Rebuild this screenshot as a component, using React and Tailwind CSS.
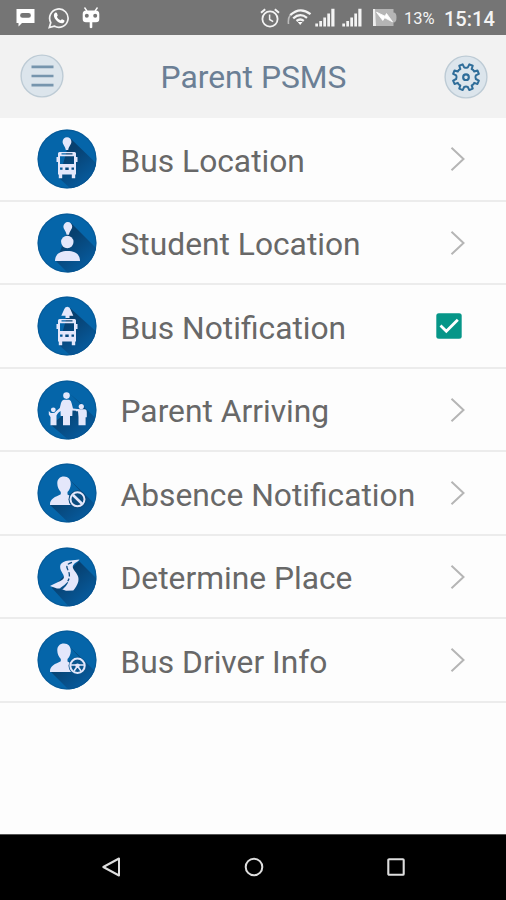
import React, { useState } from 'react';

const StatusBar = () => (
  <div className="h-[35px] bg-[#757575] flex items-center justify-between pl-4 pr-[11px] text-[#f4f4f4]">
    <div className="flex items-center">
      <svg className="w-[19px] h-[19px]" viewBox="0 0 19 19">
        <path fillRule="evenodd" fill="#fff" d="M0.5 1H18.5V15H6L2.5 18.5V15H0.5Z M6.5 5A2.3 2.3 0 0 0 6.5 9.8H12.5A2.3 2.3 0 0 0 12.5 5Z" />
      </svg>
      <svg className="w-[22px] h-[22px] ml-[13px]" viewBox="0 0 22 22" fill="none" stroke="#f4f4f4">
        <path strokeWidth="1.7" d="M1.3 20.5L2.8 15.6A9.2 9.2 0 1 1 6.2 19.1Z" />
        <path fill="#fff" stroke="none" d="M7.4 5.5C8.3 5.2 8.7 5.5 9 6.3L9.7 8.2C9.9 8.9 8.7 9.6 8.9 10C9.7 11.5 10.8 12.5 12.3 13.2C12.9 13.4 13.5 12 14.1 12.2L16.2 13.3C16.8 13.7 16.4 15.1 15.6 15.7C13.6 17.2 10.3 15.4 8.2 13.2C6.2 11.1 4.6 7.4 7.4 5.5Z" />
      </svg>
      <svg className="w-[18px] h-[22px] ml-3" viewBox="0 0 18 22">
        <path d="M2.5 0.5L5 4M15.5 0.5L13 4" stroke="#fff" strokeWidth="1.3" />
        <path fillRule="evenodd" fill="#fff" d="M4 3.5H14Q17.3 3.5 17.3 7V12Q17.3 15.3 14 15.3H10.3V20.5Q9 22 7.7 20.5V15.3H4Q0.7 15.3 0.7 12V7Q0.7 3.5 4 3.5Z M4.8 6.8A2 2 0 1 0 4.8 10.8A2 2 0 1 0 4.8 6.8Z M13.2 6.8A2 2 0 1 0 13.2 10.8A2 2 0 1 0 13.2 6.8Z" />
      </svg>
    </div>
    <div className="flex items-center">
      <svg className="w-5 h-5" viewBox="0 0 20 20" fill="none" stroke="#f4f4f4" strokeWidth="1.8">
        <circle cx="10" cy="11" r="7.6" />
        <path d="M1 4.7L5.2 1.2M19 4.7L14.8 1.2" strokeWidth="2" />
        <path d="M9.6 6.5V11.5L13.2 13.7" strokeWidth="1.5" />
      </svg>
      <svg className="w-[25px] h-[19px] ml-[7px]" viewBox="0 0 25 19" fill="none" stroke="#f4f4f4" strokeWidth="2.3">
        <path d="M3.2 7.2Q13 -2 23.5 6.2" />
        <path d="M6.2 10.3Q13 4.3 20 9.8" />
        <path d="M9.5 13Q13.2 10 16.8 12.8" />
        <path d="M10.8 14L13.2 17L15.5 14Z" fill="#fff" stroke="none" />
        <path d="M3.2 7.2Q0.8 10 1.5 16" stroke="#bcbcbc" strokeWidth="1.6" />
      </svg>
      <Signal className="ml-[3px]" />
      <Signal className="ml-[7px]" />
      <svg className="w-6 h-[19px] ml-[11px]" viewBox="0 0 24 19">
        <path d="M0 1H20.5V4.5Q23.5 4.5 23.5 9.5T20.5 14.5V18H0Z" fill="#b5b5b5" />
        <path d="M0 1H2L3 18H0Z" fill="#eee" />
        <path d="M3.5 4.2L12 8.2L13.5 5.5L19.5 13.8L11.7 9.8L9.8 12.5Z" fill="#fff" stroke="#fff" strokeWidth="0.8" />
      </svg>
      <span className="ml-[7.5px] w-[31px] text-[16.5px] leading-none whitespace-nowrap mt-[3px]">13%</span>
      <span className="ml-[9px] w-[51px] text-[20px] leading-none font-medium whitespace-nowrap mt-[3px]">15:14</span>
    </div>
  </div>
);

const Signal = ({ className }) => (
  <svg className={`w-5 h-[19px] ${className}`} viewBox="0 0 20 19" fill="#f4f4f4">
    <path d="M0.3 15.5H3V18.5H0.3ZM4.3 13H7V18.5H4.3ZM8.3 9.5H11V18.5H8.3ZM12.3 5.5H15V18.5H12.3ZM16.3 0.8H19.5V18.5H16.3Z" />
  </svg>
);

const Header = () => (
  <header className="h-[83px] bg-[#f2f2f2] flex items-center justify-between pl-5 pr-[18px]">
    <button className="mb-0.5">
      <svg className="w-11 h-11" viewBox="0 0 44 44">
        <circle cx="22" cy="22" r="20.9" fill="#dce5ec" stroke="#bdcbd5" strokeWidth="1.4" />
        <path d="M11.5 12.9H33.5M11.5 22H33.5M11.5 31.1H33.5" stroke="#7695ad" strokeWidth="2.6" />
      </svg>
    </button>
    <h1 className="text-[31.8px] leading-none text-[#6b7f95] whitespace-nowrap pt-0.5 pr-px">Parent PSMS</h1>
    <button>
      <svg className="w-11 h-11" viewBox="0 0 44 44" fill="none">
        <circle cx="22" cy="22" r="20.9" fill="#dce5ec" stroke="#bdcbd5" strokeWidth="1.4" />
        <g transform="translate(22 22.2)" stroke="#2f6d99">
          <path
            d="M9.83 1.82L12.88 3.33L11.46 6.75L8.24 5.66Q7.5 7.5 5.66 8.24L6.75 11.46L3.33 12.88L1.82 9.83Q0 9 -1.82 9.83L-3.33 12.88L-6.75 11.46L-5.66 8.24Q-7.5 7.5 -8.24 5.66L-11.46 6.75L-12.88 3.33L-9.83 1.82Q-9 0 -9.83 -1.82L-12.88 -3.33L-11.46 -6.75L-8.24 -5.66Q-7.5 -7.5 -5.66 -8.24L-6.75 -11.46L-3.33 -12.88L-1.82 -9.83Q0 -9 1.82 -9.83L3.33 -12.88L6.75 -11.46L5.66 -8.24Q7.5 -7.5 8.24 -5.66L11.46 -6.75L12.88 -3.33L9.83 -1.82Q9 0 9.83 1.82Z"
            strokeWidth="2" strokeLinejoin="round"
          />
          <circle r="2.8" strokeWidth="2.2" />
        </g>
      </svg>
    </button>
  </header>
);

const Disc = ({ id, shadow, children }) => (
  <svg className="w-[60px] h-[60px] shrink-0 mt-px" viewBox="0 0 60 60">
    <defs>
      <clipPath id={`${id}-clip`}><circle cx="30" cy="30" r="29.5" /></clipPath>
      <linearGradient id={`${id}-shade`} gradientUnits="userSpaceOnUse" x1="30" y1="26" x2="50" y2="50">
        <stop offset="0" stopColor="#07406f" />
        <stop offset="1" stopColor="#07599a" />
      </linearGradient>
    </defs>
    <circle cx="30" cy="30" r="29.5" fill="#0565a9" />
    <path d={shadow} fill={`url(#${id}-shade)`} clipPath={`url(#${id}-clip)`} />
    <circle cx="30" cy="30" r="28.9" fill="none" stroke="#07508a" strokeWidth="1.1" opacity="0.5" />
    <g fill="#e4e7fb">{children}</g>
  </svg>
);

const Pin = () => (
  <path d="M30 8.3A4.4 4.4 0 0 1 34.4 12.7C34.4 15.5 31.8 17 31.2 21H28.8C28.2 17 25.6 15.5 25.6 12.7A4.4 4.4 0 0 1 30 8.3Z" />
);

const Bus = () => (
  <path
    fillRule="evenodd"
    d="M22.5 23H37.5Q39 23 39 24.5V28H40.5V33H39V45.5H38.2V49.2H34.8V45.5H25.2V49.2H21.8V45.5H21V33H19.5V28H21V24.5Q21 23 22.5 23Z M24.5 24.3V25.5H35.5V24.3Z M23 27.2V35H37V27.2Z M23 38.4V40.8H25.5V38.4Z M34.5 38.4V40.8H37V38.4Z M28.3 38.4V41H31.7V38.4Z"
  />
);

const User = () => (
  <path d="M27 13.5C31.2 13.5 34 16.5 33.8 21.2C33.6 25 32 27.5 30.5 29V31.5C34 33.8 40.5 34 40.8 38V42H13C12.6 35.5 18.5 34 23.8 31.3V29C21.8 27 20.3 24 20.3 20.5C20.2 16.2 22.8 13.5 27 13.5Z" />
);

const BusLocationIcon = () => (
  <Disc id="bus-location" shadow="M34 10L60 35V60H34L22 49L30 21Z">
    <Pin />
    <Bus />
  </Disc>
);

const StudentLocationIcon = () => (
  <Disc id="student-location" shadow="M34 10L64 40V60H31L19 48L30 21Z">
    <g transform="translate(.8 .8)"><Pin /></g>
    <circle cx="30.3" cy="29" r="6.2" />
    <path d="M18 48C18 41.5 22.5 38 30.5 38S43 41.5 43 48Z" />
  </Disc>
);

const BusNotificationIcon = () => (
  <Disc id="bus-notification" shadow="M33 12L62 38V60H34L22 49L30 20Z">
    <path d="M30.3 10.8Q32.8 10.8 33.5 13.4L36.3 19.8H24.3L27.1 13.4Q27.8 10.8 30.3 10.8ZM28.5 19.8H32.5V22H28.5Z" />
    <Bus />
  </Disc>
);

const ParentIcon = () => (
  <Disc id="parent" shadow="M32 13L62 41V62H34L14 45L30 32L48 27Z">
    <circle cx="29.5" cy="15.6" r="3.3" />
    <path d="M26.8 19.8H32.2Q34.2 20.2 34.7 23.5L36 28.5L42.5 29.3V31L35.5 30.6L35.3 36H33V45.2H26V36H23.7L23.5 31L18 35.2L16.8 33.3L22.8 28L24 23Q24.8 20.2 26.8 19.8Z" />
    <circle cx="16.3" cy="29.8" r="2.4" />
    <circle cx="44.3" cy="26.6" r="2.6" />
    <path d="M11.8 31L13.8 33H18.3L20.8 31L21.3 32.3L19.5 35.5V45.2H13.5V37L11.8 34.6Z" />
    <path d="M39 29.3H48Q49.8 29.5 49.8 32V37.2H48.6V45.2H41.5V37L41 31.3H39Z" />
  </Disc>
);

const AbsenceIcon = () => (
  <Disc id="absence" shadow="M32 16L62 45V62H34L13 42L33 31L45 30Z">
    <User />
    <circle cx="40.5" cy="36.3" r="9" fill="#0a4b7e" />
    <circle cx="40.5" cy="36.3" r="7" fill="none" stroke="#e4e7fb" strokeWidth="2" />
    <path d="M36 32L45 40.8" stroke="#e4e7fb" strokeWidth="2.6" />
  </Disc>
);

const RoadIcon = () => (
  <Disc id="road" shadow="M42 14L61 33V62H34L15 41Z">
    <path d="M26 15.2Q29 13.2 33.5 13.6L42.5 12.6Q42 14.2 38.5 15.8C35.5 18 35 20 37 23C40 27 42.3 29.8 41.3 34.5C40.6 38 38 41.5 36.3 43.6L29 43.8L23 41.4L20 41.6L13 39C18 35.8 25 34.5 26.8 31C27.8 28.2 24.2 25.5 23.3 21.5C22.8 18.5 23.3 16.8 26 15.2Z" />
    <path d="M35 15.3C29.5 17.2 29 19 30.6 22.3C32.5 26 33.5 29.5 30.8 34.3" fill="none" stroke="#0b4b80" strokeWidth="1.3" strokeDasharray="4.5 2" />
    <path d="M30.5 35Q27.5 38.5 22.5 41.5L25.5 42.4Q29.5 39 31.2 35.4Z" fill="#0b528b" />
  </Disc>
);

const DriverIcon = () => (
  <Disc id="driver" shadow="M32 16L62 45V62H34L14 42L33 31L45 30Z">
    <User />
    <circle cx="40.5" cy="35.8" r="9" fill="#0b568f" />
    <g fill="none" stroke="#e4e7fb" strokeWidth="2">
      <circle cx="40.5" cy="35.8" r="7.2" />
      <path d="M34 35Q37.5 35 40.5 34.8Q43.5 35 47 35M40.5 36L37 41M40.5 36L44 41" strokeWidth="1.6" />
    </g>
    <circle cx="40.5" cy="35.6" r="2.2" />
  </Disc>
);

const items = [
  { label: 'Bus Location', icon: BusLocationIcon },
  { label: 'Student Location', icon: StudentLocationIcon },
  { label: 'Bus Notification', icon: BusNotificationIcon, toggle: true },
  { label: 'Parent Arriving', icon: ParentIcon },
  { label: 'Absence Notification', icon: AbsenceIcon },
  { label: 'Determine Place', icon: RoadIcon },
  { label: 'Bus Driver Info', icon: DriverIcon },
];

const Chevron = () => (
  <svg className="w-4 h-[26px] mt-px" viewBox="0 0 16 26" fill="none" stroke="#b5b5b5" strokeWidth="2">
    <path d="M1.5 1.7L13.5 13L1.5 24.3" />
  </svg>
);

const App = () => {
  const [notify, setNotify] = useState(true);

  return (
    <div className="w-[506px] h-[900px] flex flex-col bg-[#fdfdfd] font-['Roboto',sans-serif] overflow-hidden">
      <StatusBar />
      <Header />

      <main className="flex-1">
        {items.map(({ label, icon: Icon, toggle }) => (
          <div key={label} className="h-[83.5px] flex items-center pl-[37px] border-b-2 border-[#ececec]">
            <Icon />
            <span className="ml-[23.5px] flex-1 pt-1.5 text-[31.75px] leading-none text-[#686868] whitespace-nowrap">{label}</span>
            {toggle ? (
              <button onClick={() => setNotify(!notify)} className="mr-11">
                <svg className="w-[26px] h-[26px]" viewBox="0 0 26 26">
                  <rect x="0.3" y="0.3" width="25.4" height="25.4" rx="2.5" fill="#069688" />
                  {notify && <path d="M4.5 12.5L10.3 18.2L21.8 6.7" fill="none" stroke="#fff" strokeWidth="2.8" />}
                </svg>
              </button>
            ) : (
              <div className="mr-[40px]"><Chevron /></div>
            )}
          </div>
        ))}
      </main>

      <nav className="h-[66px] bg-black border-t border-[#555] flex items-center justify-between pl-[101px] pr-[100px] pb-0.5">
        <svg className="w-5 h-5" viewBox="0 0 20 20" fill="none" stroke="#dedede" strokeWidth="2">
          <path d="M18 1.5V18.5L2.3 10Z" strokeLinejoin="round" />
        </svg>
        <svg className="w-5 h-5" viewBox="0 0 20 20" fill="none" stroke="#dedede" strokeWidth="2">
          <circle cx="10" cy="10" r="8.3" />
        </svg>
        <svg className="w-5 h-5" viewBox="0 0 20 20" fill="none" stroke="#dedede" strokeWidth="2.1">
          <rect x="2.3" y="2.3" width="15.4" height="15.4" rx="0.8" />
        </svg>
      </nav>
    </div>
  );
};

export default App;
